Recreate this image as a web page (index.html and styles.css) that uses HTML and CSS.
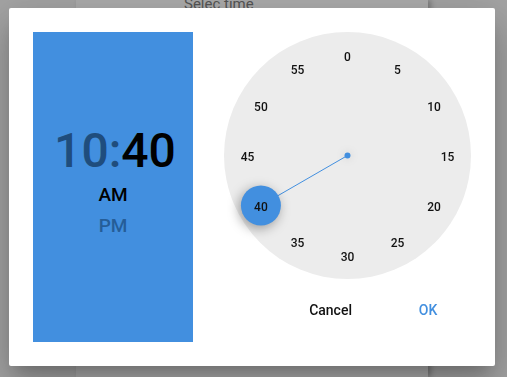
FILE: index.html
```html
<!DOCTYPE html>
<html lang="en">
<head>
    <meta charset="UTF-8">
    <meta name="viewport" content="width=device-width, initial-scale=1.0">
    <title>Select time</title>
    <link rel="stylesheet" href="styles.css">
</head>
<body>
    <div class="page">
        <div class="page-card">
            <p class="page-title">Selec time</p>
        </div>
    </div>

    <div class="dialog">
        <div class="time-panel">
            <div class="time-display">
                <span class="time-hours">10:</span><span class="time-minutes">40</span>
            </div>
            <div class="ampm active">AM</div>
            <div class="ampm">PM</div>
        </div>

        <div class="picker">
            <div class="clock">
                <svg width="247" height="247" viewBox="0 0 247 247">
                    <circle class="clock-face" cx="123.5" cy="123.5" r="123.5"/>
                    <line class="clock-hand" x1="123.5" y1="123.5" x2="36.9" y2="173.5"/>
                    <circle class="clock-center" cx="123.5" cy="123.5" r="3"/>
                    <circle class="clock-knob" cx="36.9" cy="173.5" r="20"/>
                    <g class="clock-numbers">
                        <text x="123.5" y="24.5">0</text>
                        <text x="173.5" y="37.9">5</text>
                        <text x="210.1" y="74.5">10</text>
                        <text x="223.5" y="124.5">15</text>
                        <text x="210.1" y="174.5">20</text>
                        <text x="173.5" y="211.1">25</text>
                        <text x="123.5" y="224.5">30</text>
                        <text x="73.5" y="211.1">35</text>
                        <text x="36.9" y="174.5">40</text>
                        <text x="23.5" y="124.5">45</text>
                        <text x="36.9" y="74.5">50</text>
                        <text x="73.5" y="37.9">55</text>
                    </g>
                </svg>
            </div>
            <div class="actions">
                <button class="btn btn-cancel">Cancel</button>
                <button class="btn btn-ok">OK</button>
            </div>
        </div>
    </div>
</body>
</html>
```

FILE: styles.css
```css
body {
    margin: 0;
    font-family: Roboto, "Liberation Sans", sans-serif;
    background-color: #a4a4a4;
    overflow: hidden;
}
.page {
    height: 377px;
    padding-left: 76px;
}
.page-card {
    width: 352px;
    height: 100%;
    background: #acacac;
    box-shadow: 3px 0 5px rgba(0,0,0,0.25);
}
.page-title {
    margin: 0;
    padding-left: 108px;
    position: relative;
    top: -5px;
    font-size: 15px;
    color: #555;
}
.dialog {
    position: fixed;
    left: 9px;
    top: 8px;
    width: 438px;
    height: 310px;
    padding: 24px;
    background: #fff;
    border-radius: 2px;
    display: flex;
    gap: 31px;
    box-shadow: 0 11px 15px -7px rgba(0,0,0,0.2), 0 24px 38px 3px rgba(0,0,0,0.14), 0 9px 46px 8px rgba(0,0,0,0.12);
}
.time-panel {
    width: 160px;
    height: 215px;
    padding-top: 95px;
    background: #428fdf;
    display: flex;
    flex-direction: column;
    align-items: center;
}
.time-display {
    font-size: 48px;
    font-weight: 500;
    line-height: 48px;
    margin-bottom: 4px;
    margin-left: 4px;
}
.time-hours {
    color: #1f4d7d;
}
.time-minutes {
    color: #000;
}
.ampm {
    font-size: 19px;
    font-weight: 500;
    line-height: 31px;
    color: #255d98;
}
.ampm.active {
    color: #000;
}
.picker {
    flex: 1;
    display: flex;
    flex-direction: column;
    align-items: flex-end;
}
.clock {
    width: 247px;
    height: 247px;
}
.clock svg {
    display: block;
    overflow: visible;
}
.clock-face {
    fill: #ececec;
}
.clock-hand {
    stroke: #428fdf;
    stroke-width: 1;
}
.clock-center {
    fill: #428fdf;
    filter: drop-shadow(0 0 4px rgba(0,0,0,0.15));
}
.clock-knob {
    fill: #428fdf;
    filter: drop-shadow(-2px 3px 6px rgba(0,0,0,0.35));
}
.clock-numbers text {
    font-family: Roboto, "Liberation Sans", sans-serif;
    font-size: 12px;
    font-weight: 500;
    fill: #111;
    text-anchor: middle;
    dominant-baseline: central;
}
.actions {
    display: flex;
    gap: 28px;
    margin-top: 13px;
    padding-right: 11px;
}
.btn {
    height: 36px;
    min-width: 64px;
    padding: 0 16px;
    border: none;
    background: transparent;
    font-family: Roboto, "Liberation Sans", sans-serif;
    font-size: 14px;
    font-weight: 500;
    cursor: pointer;
}
.btn-cancel {
    color: #111;
}
.btn-ok {
    color: #428fdf;
}
```
